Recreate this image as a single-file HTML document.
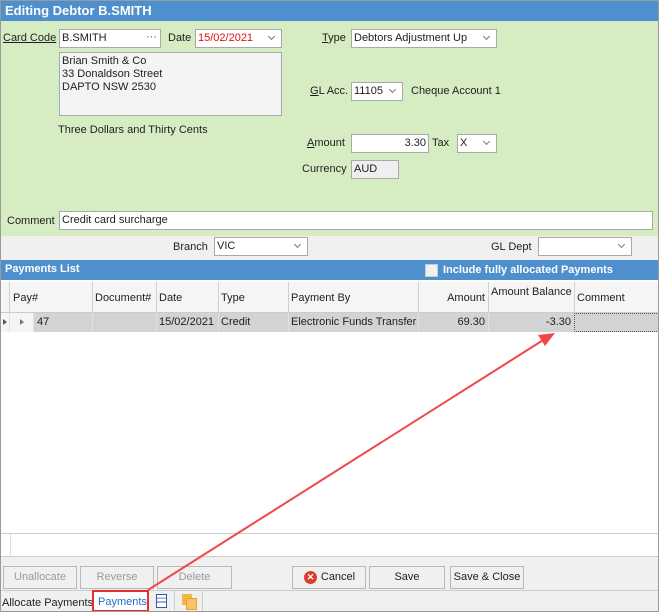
<!DOCTYPE html>
<html><head><style>
body{margin:0;width:659px;height:612px;position:relative;overflow:hidden;font-family:"Liberation Sans",sans-serif;font-size:11px;color:#1e1e1e;background:#fff}
div,span{position:absolute;box-sizing:border-box}
.l{white-space:nowrap;line-height:13px}
.in{background:#fff;border:1px solid #a9a9a9;padding:2px 2px;white-space:nowrap;line-height:12px}
.dd::after{content:"";position:absolute;right:7px;top:4px;width:4px;height:4px;border-right:1.5px solid #777;border-bottom:1.5px solid #777;transform:rotate(45deg)}
.u{text-decoration:underline}
.h{border-right:1px solid #d0d0d0;height:31px;top:0;padding:10px 3px 0;white-space:nowrap}
.c{border-right:1px solid #e0e0e0;height:19px;top:0;padding:3px 3px 0;white-space:nowrap}
.b{height:23px;border:1px solid #b8b8b8;background:#f0f0f0;text-align:center;line-height:21px;font-size:11px;white-space:nowrap}
.g{color:#9a9a9a}
</style></head><body>
<div style="left:0;top:0;width:659px;height:21px;background:#4e8fcd;color:#fff;font-weight:bold;font-size:13px;padding:3px 5px">Editing Debtor B.SMITH</div>
<div style="left:0;top:21px;width:659px;height:215px;background:#d6edc4"></div>
<div class="l u" style="left:3px;top:32px">Card Code</div>
<div class="in" style="left:59px;top:29px;width:102px;height:19px">B.SMITH<span style="right:3px;top:1px;color:#555">···</span></div>
<div class="l" style="left:168px;top:32px">Date</div>
<div class="in dd" style="left:195px;top:29px;width:87px;height:19px;color:#e01010">15/02/2021</div>
<div class="in" style="left:59px;top:52px;width:223px;height:64px;background:#f4f4f4;white-space:pre;line-height:13px">Brian Smith &amp; Co
33 Donaldson Street
DAPTO NSW 2530</div>
<div class="l" style="left:58px;top:124px">Three Dollars and Thirty Cents</div>
<div class="l" style="left:322px;top:32px"><span class="u" style="position:static">T</span>ype</div>
<div class="in dd" style="left:351px;top:29px;width:146px;height:19px">Debtors Adjustment Up</div>
<div class="l" style="left:310px;top:85px"><span class="u" style="position:static">G</span>L Acc.</div>
<div class="in dd" style="left:351px;top:82px;width:52px;height:19px">11105</div>
<div class="l" style="left:411px;top:85px">Cheque Account 1</div>
<div class="l" style="left:307px;top:137px"><span class="u" style="position:static">A</span>mount</div>
<div class="in" style="left:351px;top:134px;width:78px;height:19px;text-align:right">3.30</div>
<div class="l" style="left:432px;top:137px">Tax</div>
<div class="in dd" style="left:457px;top:134px;width:40px;height:19px">X</div>
<div class="l" style="left:302px;top:163px">Currency</div>
<div class="in" style="left:351px;top:160px;width:48px;height:19px;background:#efefef">AUD</div>
<div class="l" style="left:7px;top:215px">Comment</div>
<div class="in" style="left:59px;top:211px;width:594px;height:19px">Credit card surcharge</div>
<div style="left:0;top:236px;width:659px;height:24px;background:#f0f0f0"></div>
<div class="l" style="left:173px;top:241px">Branch</div>
<div class="in dd" style="left:214px;top:237px;width:94px;height:19px">VIC</div>
<div class="l" style="left:491px;top:241px">GL Dept</div>
<div class="in dd" style="left:538px;top:237px;width:94px;height:19px"></div>
<div style="left:0;top:260px;width:659px;height:20px;background:#4e8fcd;color:#fff;font-weight:bold;padding:3px 5px">Payments List</div>
<div style="left:425px;top:264px;width:13px;height:13px;background:#f0f0f0;border:1px solid #ccc"></div>
<div class="l" style="left:443px;top:264px;color:#fff;font-weight:bold">Include fully allocated Payments</div>
<div style="left:0;top:282px;width:659px;height:31px;background:#f5f5f5;border-bottom:1px solid #ccc">
<div class="h" style="left:0;width:10px;padding:0"></div>
<div class="h" style="left:10px;width:83px">Pay#</div>
<div class="h" style="left:92px;width:65px">Document#</div>
<div class="h" style="left:156px;width:63px">Date</div>
<div class="h" style="left:218px;width:71px">Type</div>
<div class="h" style="left:288px;width:131px">Payment By</div>
<div class="h" style="left:418px;width:71px;text-align:right">Amount</div>
<div class="h" style="left:488px;width:87px;padding-top:4px;text-align:right">Amount Balance</div>
<div class="h" style="left:574px;width:85px;border:0">Comment</div>
</div>
<div style="left:0;top:313px;width:659px;height:19px;background:#d3d3d3">
<div class="c" style="left:0;width:10px;background:#f5f5f5;padding:0"><span style="left:3px;top:6px;border-left:4px solid #555;border-top:3px solid transparent;border-bottom:3px solid transparent"></span></div>
<div class="c" style="left:10px;width:24px;background:#f5f5f5"><span style="left:10px;top:6px;border-left:4px solid #777;border-top:3px solid transparent;border-bottom:3px solid transparent"></span></div>
<div class="c" style="left:34px;width:59px">47</div>
<div class="c" style="left:92px;width:65px"></div>
<div class="c" style="left:156px;width:63px">15/02/2021</div>
<div class="c" style="left:218px;width:71px">Credit</div>
<div class="c" style="left:288px;width:131px">Electronic Funds Transfer</div>
<div class="c" style="left:418px;width:71px;text-align:right">69.30</div>
<div class="c" style="left:488px;width:87px;text-align:right">-3.30</div>
<div style="left:574px;top:0;width:85px;height:19px;border:1px dotted #555"></div>
</div>
<div style="left:0;top:533px;width:659px;height:24px;border-top:1px solid #ccc;border-bottom:1px solid #ccc"><div style="left:10px;top:0;width:1px;height:22px;background:#ddd"></div></div>
<div style="left:0;top:557px;width:659px;height:55px;background:#f0f0f0"></div>
<div class="b g" style="left:3px;top:566px;width:74px">Unallocate</div>
<div class="b g" style="left:80px;top:566px;width:74px">Reverse</div>
<div class="b g" style="left:157px;top:566px;width:75px">Delete</div>
<div class="b" style="left:292px;top:566px;width:74px;padding-left:18px"><span style="left:11px;top:4px;width:13px;height:13px;border-radius:50%;background:#d6402d;color:#fff;font-size:9px;line-height:13px;font-weight:bold;text-align:center">✕</span>Cancel</div>
<div class="b" style="left:369px;top:566px;width:76px">Save</div>
<div class="b" style="left:450px;top:566px;width:74px">Save &amp; Close</div>
<div style="left:0;top:590px;width:659px;height:22px;border-top:1px solid #ccc"></div>
<div class="l" style="left:2px;top:597px;font-size:11px">Allocate Payments</div>
<div style="left:92px;top:590px;width:57px;height:22px;border:2px solid #e53030;background:#fff;color:#1f6fd0;padding:4px 0 0 4px;white-space:nowrap">Payments</div>
<div style="left:149px;top:591px;width:26px;height:21px;border-right:1px solid #ccc"><span style="left:7px;top:3px;width:11px;height:14px;border:1px solid #3c5a8a;background:linear-gradient(#fff 20%,#8fb3e0 20%,#8fb3e0 35%,#fff 35%,#fff 50%,#8fb3e0 50%,#8fb3e0 65%,#fff 65%)"></span></div>
<div style="left:176px;top:591px;width:27px;height:21px;border-right:1px solid #ccc"><span style="left:6px;top:3px;width:10px;height:11px;background:#f6b74a"></span><span style="left:10px;top:7px;width:11px;height:12px;background:#f9c563;border:1px solid #e5a030"></span></div>
<svg style="position:absolute;left:0;top:0" width="659" height="612"><line x1="148" y1="590" x2="548" y2="337" stroke="#f04848" stroke-width="2"/><polygon points="555,333 538,335 545,346" fill="#f04848"/><rect x="0.5" y="0.5" width="658" height="611" fill="none" stroke="#9a9a9a"/></svg>
</body></html>
